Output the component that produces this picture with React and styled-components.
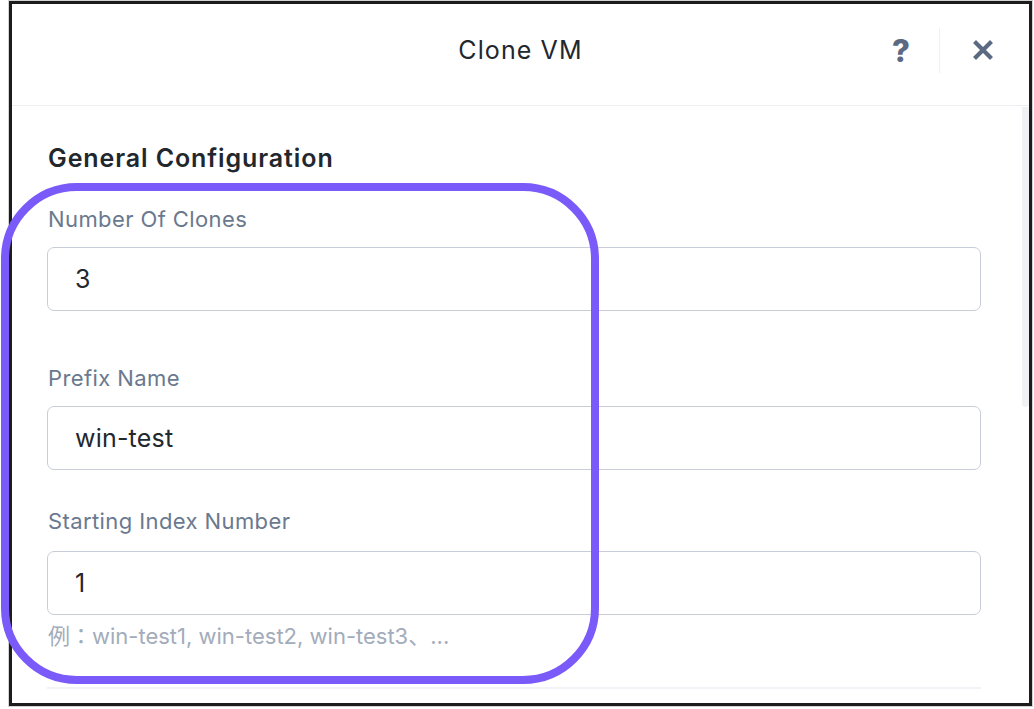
import React from "react";
import styled, { createGlobalStyle } from "styled-components";

const GlobalStyle = createGlobalStyle`
  html, body { margin: 0; padding: 0; background: #ffffff; }
  body { font-family: Inter, "Noto Sans", "Noto Sans CJK JP", sans-serif; }
  * { box-sizing: border-box; }
`;

const Page = styled.div`
  position: relative;
  width: 1034px;
  height: 709px;
  padding: 1px 2px 3px 9px;
`;

const Frame = styled.div`
  width: 1023px;
  height: 705px;
  border: 3px solid #1c1c1c;
  box-shadow: 0 0 0 1px #d4d4d4;
  background: #fff;
  display: flex;
  flex-direction: column;
  overflow: hidden;
`;

const Header = styled.header`
  height: 102px;
  flex: none;
  display: grid;
  grid-template-columns: 1fr auto 1fr;
  align-items: center;
  padding-bottom: 9px;
  border-bottom: 1px solid #eceef2;
`;

const Title = styled.h1`
  grid-column: 2;
  margin: 0;
  font-size: 25px;
  letter-spacing: 1.1px;
  font-weight: 400;
  color: #22272e;
`;

const Actions = styled.div`
  grid-column: 3;
  justify-self: end;
  display: flex;
  align-items: center;
  padding-right: 3px;
`;

const IconButton = styled.button`
  width: ${(p) => p.$w}px;
  height: 46px;
  border: 0;
  padding: 0;
  background: none;
  display: flex;
  align-items: center;
  justify-content: center;
  color: #5b6a82;
  font-family: Inter, sans-serif;
  font-weight: 800;
  font-size: 31px;
  cursor: pointer;
`;

const VDivider = styled.div`
  width: 1px;
  height: 45px;
  background: #eef0f3;
`;

const Body = styled.div`
  flex: 1;
  display: flex;
  min-height: 0;
`;

const Content = styled.div`
  flex: 1;
  padding: 0 41px 0 35px;
  display: flex;
  flex-direction: column;
`;

const ScrollTrack = styled.div`
  width: 7px;
  flex: none;
  padding-top: 1px;
`;

const Thumb = styled.div`
  height: 300px;
  border-radius: 0 0 4px 4px;
  background: #eff1f4;
`;

const SectionTitle = styled.h2`
  margin: 37px 0 0 1px;
  font-size: 25px;
  letter-spacing: 0.9px;
  line-height: 30px;
  font-weight: 600;
  color: #22272e;
`;

const Label = styled.label`
  display: block;
  margin: ${(p) => p.$top}px 0 0 1px;
  font-size: 22px;
  letter-spacing: 0.4px;
  line-height: 26px;
  color: #6a798e;
`;

const Input = styled.div`
  margin-top: ${(p) => p.$gap}px;
  height: 64px;
  border: 1px solid #c8cdd8;
  border-radius: 7px;
  padding-left: 27px;
  display: flex;
  align-items: center;
  font-size: 25px;
  letter-spacing: 0.2px;
  color: #23282f;
`;

const Hint = styled.div`
  margin: 8px 0 0 1px;
  font-size: 22px;
  line-height: 26px;
  color: #a3acba;
`;

const HDivider = styled.div`
  margin-top: 38px;
  height: 2px;
  background: #f2f3f6;
`;

const Highlight = styled.div`
  position: absolute;
  left: 1px;
  top: 183px;
  width: 598px;
  height: 501px;
  border: 8px solid #7a5af8;
  border-radius: 76px;
  pointer-events: none;
`;

const CloseIcon = () => (
  <svg width="20" height="20" viewBox="0 0 20 20">
    <path d="M3 3 L17 17 M17 3 L3 17" stroke="#5b6a82" strokeWidth="4.2" strokeLinecap="square" />
  </svg>
);

export default function App() {
  return (
    <>
      <GlobalStyle />
      <Page>
        <Frame>
          <Header>
            <Title>Clone VM</Title>
            <Actions>
              <IconButton $w={76}>?</IconButton>
              <VDivider />
              <IconButton $w={86}>
                <CloseIcon />
              </IconButton>
            </Actions>
          </Header>
          <Body>
            <Content>
              <SectionTitle>General Configuration</SectionTitle>
              <Label $top={33}>Number Of Clones</Label>
              <Input $gap={15}>3</Input>
              <Label $top={54}>Prefix Name</Label>
              <Input $gap={15}>win-test</Input>
              <Label $top={38}>Starting Index Number</Label>
              <Input $gap={17}>1</Input>
              <Hint>例：win-test1, win-test2, win-test3、...</Hint>
              <HDivider />
            </Content>
            <ScrollTrack>
              <Thumb />
            </ScrollTrack>
          </Body>
        </Frame>
        <Highlight />
      </Page>
    </>
  );
}
